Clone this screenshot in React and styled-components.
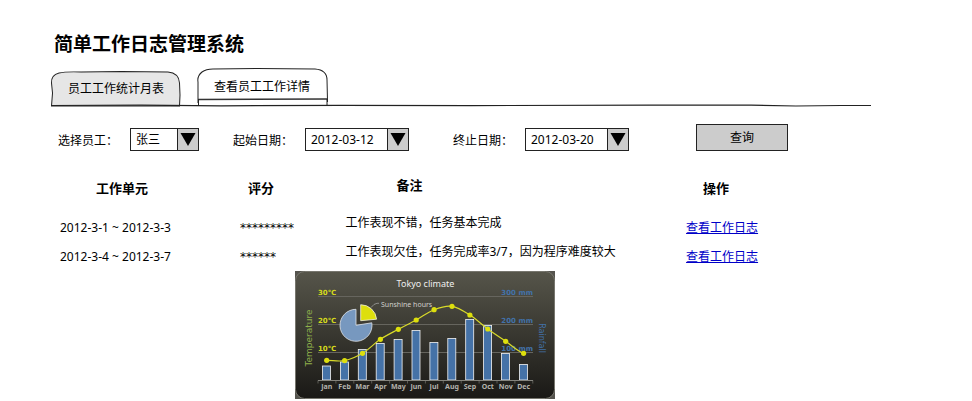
import React from "react";
import styled, { createGlobalStyle } from "styled-components";

const GlobalStyle = createGlobalStyle`
  body {
    margin: 0;
    background: #fff;
    color: #000;
    font: 12px/20px "Noto Sans", "Noto Sans CJK SC", sans-serif;
  }
  *, *::before, *::after {
    box-sizing: border-box;
  }
`;

const Page = styled.main`
  padding: 31px 101px 0 51px;
`;

const Title = styled.h1`
  margin: 0;
  padding-left: 3px;
  font-size: 19px;
  line-height: 24px;
  font-weight: 700;
  font-family: "Noto Sans CJK SC", sans-serif;
`;

const TabBar = styled.div`
  position: relative;
  display: flex;
  align-items: flex-end;
  gap: 16px;
  height: 51px;
`;

const TabButton = styled.button`
  position: relative;
  height: ${(p) => (p.$active ? 38 : 35)}px;
  padding: 0 17px;
  border: 0;
  background: none;
  color: inherit;
  font: inherit;
  line-height: ${(p) => (p.$active ? 34 : 36)}px;
  cursor: pointer;
`;

const TabSketch = styled.svg`
  position: absolute;
  inset: 0;
  width: 100%;
  height: 100%;
  overflow: visible;
`;

const TabText = styled.span`
  position: relative;
`;

const Baseline = styled.svg`
  position: absolute;
  left: 0;
  bottom: -1px;
  width: 100%;
  height: 3px;
`;

const Filters = styled.form`
  display: grid;
  grid-template-columns: 175fr 220fr 243fr 175fr;
  align-items: end;
  margin-top: 18px;
  padding-left: 7px;
`;

const Field = styled.div`
  display: flex;
  align-items: flex-end;
`;

const FieldLabel = styled.label`
  width: 72px;
`;

const SelectBox = styled.div`
  position: relative;
  width: ${(p) => p.$width}px;
`;

const Select = styled.select`
  display: block;
  width: 100%;
  height: 23px;
  padding: 0 22px 0 5px;
  border: 1px solid #222;
  border-radius: 0;
  background: #fff;
  color: #000;
  font: inherit;
  appearance: none;
`;

const Arrow = styled.svg`
  position: absolute;
  top: 0;
  right: 0;
  width: 22px;
  height: 23px;
  pointer-events: none;
`;

const QueryButton = styled.button`
  justify-self: start;
  width: 92px;
  height: 27px;
  border: 1px solid #222;
  background: #ccc;
  color: #000;
  font: inherit;
  cursor: pointer;
`;

const LogTable = styled.table`
  width: 100%;
  margin-top: 24px;
  padding-left: 9px;
  border-spacing: 0;
  table-layout: fixed;
`;

const Col = styled.col`
  width: ${(p) => p.$share}%;
`;

const HeadCell = styled.th`
  height: 38px;
  padding: 0 0 12px ${(p) => p.$indent}px;
  font-size: 13px;
  font-weight: 700;
  text-align: left;
  vertical-align: ${(p) => (p.$top ? "top" : "middle")};
`;

const Cell = styled.td`
  height: 29px;
  padding: 0;
  white-space: nowrap;
  vertical-align: ${(p) => (p.$top ? "top" : "middle")};
`;

const Score = styled.span`
  font-family: "DejaVu Sans", sans-serif;
`;

const LogLink = styled.a`
  color: #0000c8;
  text-decoration: underline;
`;

const Figure = styled.figure`
  margin: 0 0 0 244px;
  line-height: 0;
`;

const ChartSvg = styled.svg`
  width: 260px;
  height: 128px;
`;

const ChartText = styled.text`
  font-family: ${(p) => (p.$wide ? '"DejaVu Sans"' : '"Noto Sans"')}, sans-serif;
  font-size: ${(p) => p.$size}px;
  font-weight: ${(p) => (p.$bold ? 700 : 400)};
`;

function Tab({ active, children }) {
  return (
    <TabButton type="button" role="tab" aria-selected={active} $active={active}>
      {active ? (
        <TabSketch viewBox="0 0 130 38" preserveAspectRatio="none" aria-hidden="true">
          <path
            d="M1 35 L1 14 Q0 8 5 4 Q9 1 16 1 L60 0.5 L118 1 Q130 2 130 12 L130.5 34"
            fill="#fff"
            stroke="#222"
          />
          <path d="M1 31.5 L130 31" stroke="#333" strokeWidth="1.4" />
          <path d="M1.5 31 V38 M130 31 V38" stroke="#222" fill="none" />
        </TabSketch>
      ) : (
        <TabSketch viewBox="0 0 129 35" preserveAspectRatio="none" aria-hidden="true">
          <path
            d="M0.5 35 L1.5 22 L0.5 12 Q0 4 8 2 Q14 0.5 30 1 L70 0.5 L116 1 Q127 2 127.5 12 L128 24 L127.5 35 Z"
            fill="#e6e6e6"
            stroke="#222"
          />
        </TabSketch>
      )}
      <TabText>{children}</TabText>
    </TabButton>
  );
}

function SelectField({ id, label, value, width }) {
  return (
    <Field>
      <FieldLabel htmlFor={id}>{label}</FieldLabel>
      <SelectBox $width={width}>
        <Select id={id} defaultValue={value}>
          <option value={value}>{value}</option>
        </Select>
        <Arrow viewBox="0 0 22 23" aria-hidden="true">
          <rect x="0.5" y="0.5" width="21" height="22" fill="#ccc" stroke="#222" />
          <path d="M3.5 5 H18.5 L11 18 Z" />
        </Arrow>
      </SelectBox>
    </Field>
  );
}

const months = ["Jan", "Feb", "Mar", "Apr", "May", "Jun", "Jul", "Aug", "Sep", "Oct", "Nov", "Dec"];
const barTops = [95, 91, 78.5, 72.5, 68.5, 59.5, 71.5, 67.5, 48.5, 54.5, 82.5, 93.5];
const tempY = [89.3, 89.6, 82.3, 68.3, 58.3, 49, 38.7, 35.3, 44, 58, 70.3, 82.3];
const monthX = (i) => 31.7 + i * 17.9;

function smoothPath(ys) {
  let d = `M${monthX(0)} ${ys[0]}`;
  for (let i = 0; i < ys.length - 1; i++) {
    const prev = ys[Math.max(i - 1, 0)];
    const next = ys[Math.min(i + 2, ys.length - 1)];
    d += ` C${monthX(i) + 6} ${ys[i] + (ys[i + 1] - prev) / 6} ${monthX(i + 1) - 6} ${
      ys[i + 1] - (next - ys[i]) / 6
    } ${monthX(i + 1)} ${ys[i + 1]}`;
  }
  return d;
}

function ClimateChart() {
  return (
    <ChartSvg viewBox="0 0 260 128" role="img" aria-label="Tokyo climate">
      <defs>
        <linearGradient id="panel" x1="0" y1="0" x2="0" y2="1">
          <stop offset="0" stopColor="#56554a" />
          <stop offset="1" stopColor="#1a1916" />
        </linearGradient>
      </defs>
      <rect width="260" height="128" fill="#55544e" />
      <rect x="0.5" y="0.5" width="259" height="127" rx="9" fill="url(#panel)" stroke="#77766e" />
      {[25.5, 53.5, 81.5].map((y) => (
        <path key={y} d={`M23 ${y} H238`} stroke="#66655e" />
      ))}
      <ChartText $size={9} x="130.5" y="16" textAnchor="middle" fill="#eee">
        Tokyo climate
      </ChartText>
      {["30℃", "20℃", "10℃"].map((t, i) => (
        <ChartText key={t} $wide $bold $size={7} x="23" y={24 + i * 28} fill="#d6dc1c">
          {t}
        </ChartText>
      ))}
      {["300 mm", "200 mm", "100 mm"].map((t, i) => (
        <ChartText key={t} $wide $bold $size={7} x="238" y={24 + i * 28} textAnchor="end" fill="#4272aa">
          {t}
        </ChartText>
      ))}
      <ChartText $wide $size={9} textAnchor="middle" transform="translate(17 67) rotate(-90)" fill="#8fb04c">
        Temperature
      </ChartText>
      <ChartText $wide $size={8} textAnchor="middle" transform="translate(244 67) rotate(90)" fill="#4272aa">
        Rainfall
      </ChartText>
      {barTops.map((y, i) => (
        <rect
          key={months[i]}
          x={monthX(i) - 4.2}
          y={y}
          width="8"
          height={109 - y}
          fill="#4572a7"
          stroke="#f4f4f4"
          strokeWidth="0.8"
        />
      ))}
      <path d="M23 109.5 H238" stroke="#85847d" />
      {[...months, ""].map((m, i) => (
        <path key={m} d={`M${23 + i * 17.9} 109.5 v3`} stroke="#85847d" strokeWidth="0.6" />
      ))}
      {months.map((m, i) => (
        <ChartText key={m} $bold $size={7} x={monthX(i)} y="118" textAnchor="middle" fill="#b4b3ad">
          {m}
        </ChartText>
      ))}
      <path d="M61 54.3 V38.3 A16 16 0 1 0 76.8 51.8 Z" fill="#7798bf" stroke="#dfe3e8" strokeWidth="0.8" />
      <path d="M65.7 49.7 V33.7 A16 16 0 0 1 81.6 48.2 Z" fill="#dddf0d" stroke="#f0f0e0" strokeWidth="0.8" />
      <path d="M76 36.5 Q79 32.5 82 32.3 H84" fill="none" stroke="#aaa" strokeWidth="0.7" />
      <ChartText $size={7} x="86" y="36" fill="#d0d0cc">
        Sunshine hours
      </ChartText>
      <path d={smoothPath(tempY)} fill="none" stroke="#d8da2a" strokeWidth="1.2" />
      {tempY.map((y, i) => (
        <circle key={months[i]} cx={monthX(i)} cy={y} r="2.6" fill="#dddf0d" />
      ))}
    </ChartSvg>
  );
}

const logs = [
  { period: "2012-3-1 ~ 2012-3-3", score: 9, note: "工作表现不错，任务基本完成" },
  { period: "2012-3-4 ~ 2012-3-7", score: 6, note: "工作表现欠佳，任务完成率3/7，因为程序难度较大" },
];

export default function App() {
  return (
    <>
      <GlobalStyle />
      <Page>
        <Title>简单工作日志管理系统</Title>
        <TabBar role="tablist">
          <Tab active={false}>员工工作统计月表</Tab>
          <Tab active>查看员工工作详情</Tab>
          <Baseline viewBox="0 0 820 3" preserveAspectRatio="none" aria-hidden="true">
            <path
              d="M0 1.5 L90 1.2 L170 1.8 L290 1.4 L420 1.6 L600 1.2 L700 1.2 L745 2 L790 1.5 H820"
              fill="none"
              stroke="#222"
              strokeWidth="1.2"
            />
          </Baseline>
        </TabBar>
        <Filters onSubmit={(e) => e.preventDefault()}>
          <SelectField id="employee" label="选择员工：" value="张三" width={69} />
          <SelectField id="start" label="起始日期：" value="2012-03-12" width={104} />
          <SelectField id="end" label="终止日期：" value="2012-03-20" width={104} />
          <QueryButton type="submit">查询</QueryButton>
        </Filters>
        <LogTable>
          <colgroup>
            <Col $share={22.2} />
            <Col $share={13} />
            <Col $share={42} />
            <Col $share={22.8} />
          </colgroup>
          <thead>
            <tr>
              <HeadCell $indent={36}>工作单元</HeadCell>
              <HeadCell $indent={8}>评分</HeadCell>
              <HeadCell $indent={51} $top>备注</HeadCell>
              <HeadCell $indent={17}>操作</HeadCell>
            </tr>
          </thead>
          <tbody>
            {logs.map((log) => (
              <tr key={log.period}>
                <Cell>{log.period}</Cell>
                <Cell>
                  <Score>{"*".repeat(log.score)}</Score>
                </Cell>
                <Cell $top>{log.note}</Cell>
                <Cell>
                  <LogLink href="#log">查看工作日志</LogLink>
                </Cell>
              </tr>
            ))}
          </tbody>
        </LogTable>
        <Figure>
          <ClimateChart />
        </Figure>
      </Page>
    </>
  );
}
